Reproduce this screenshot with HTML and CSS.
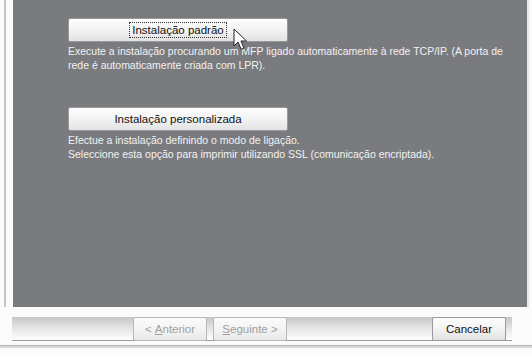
FILE: index.html
```html
<!DOCTYPE html>
<html>
<head>
<meta charset="utf-8">
<link rel="stylesheet" href="styles.css">
</head>
<body>
<div class="window">
  <div class="frame">
    <div class="panel">
      <div class="option first">
        <div class="btn big"><span class="focus">Instalação padrão</span></div>
        <p class="desc">Execute a instalação procurando um MFP ligado automaticamente à rede TCP/IP. (A porta de<br>rede é automaticamente criada com LPR).</p>
        <svg class="cursor" width="16" height="23" viewBox="0 0 16 23">
          <path d="M1 1 L1 18 L5 14 L8.2 21.3 L11 20.1 L7.9 13 L13.5 13 Z" fill="#fff" stroke="#222" stroke-width="1"/>
        </svg>
      </div>
      <div class="option second">
        <div class="btn big">Instalação personalizada</div>
        <p class="desc">Efectue a instalação definindo o modo de ligação.<br>Seleccione esta opção para imprimir utilizando SSL (comunicação encriptada).</p>
      </div>
    </div>
  </div>
  <div class="footer">
    <div class="bar">
      <div class="btn small disabled">&lt;&nbsp;<u>A</u>nterior</div>
      <div class="btn small disabled"><u>S</u>eguinte&nbsp;&gt;</div>
      <div class="spacer"></div>
      <div class="btn small">Cancelar</div>
    </div>
    <div class="rule"></div>
  </div>
</div>
</body>
</html>
```
FILE: styles.css
```css
* { box-sizing: border-box; }
html, body { margin: 0; padding: 0; }
body {
  width: 532px;
  height: 353px;
  background: #fbfbfb;
  font-family: "Liberation Sans", Arial, sans-serif;
  font-size: 11px;
  overflow: hidden;
}
.window {
  width: 532px;
  height: 353px;
  display: flex;
  flex-direction: column;
}
.frame {
  height: 307px;
  padding-left: 4px;
  padding-right: 3px;
  display: flex;
}
.frame::before {
  content: "";
  width: 7px;
  border-left: 2px solid #c4c4c4;
  background: #fbfbfb;
}
.panel {
  flex: 1;
  background: #7a7b7f;
  border-right: 2px solid #e8e8e8;
  padding-left: 55px;
  color: #f2f2f2;
}
.option { position: relative; }
.option.first { padding-top: 18px; }
.option.second { padding-top: 35px; }
.btn {
  display: flex;
  align-items: center;
  justify-content: center;
  color: #111;
  border: 1px solid #9a9a9a;
  border-radius: 2px;
  background: linear-gradient(#fdfdfd 0%, #f3f3f3 50%, #e2e2e2 100%);
}
.btn.big {
  width: 220px;
  height: 24px;
  font-size: 11.5px;
}
.focus {
  outline: 1px dotted #333;
  padding: 1px 2px;
}
.desc {
  margin: 2px 0 0 0;
  font-size: 10.5px;
  line-height: 14px;
  color: #f2f2f2;
}
.cursor {
  position: absolute;
  left: 165px;
  top: 28px;
}
.footer {
  flex: 1;
  padding: 10px 20px 0 12px;
}
.bar {
  height: 24px;
  display: flex;
  gap: 6px;
  padding-left: 121px;
  padding-right: 6px;
  background: linear-gradient(#c6c6c6 0%, #e6e6e6 50%, #fefefe 100%);
  border-bottom: 1px solid #9c9c9c;
}
.spacer { flex: 1; }
.btn.small {
  width: 74px;
  height: 24px;
  font-size: 11.5px;
}
.btn.disabled {
  color: #a0a0a0;
  background: linear-gradient(#fbfbfb 0%, #f2f2f2 60%, #e8e8e8 100%);
  border-color: #b8b8b8;
}
.rule {
  margin: 4px -20px 0 -12px;
  height: 3px;
  border-top: 1px solid #b8b8b8;
  background: #d8d8d8;
}
```
